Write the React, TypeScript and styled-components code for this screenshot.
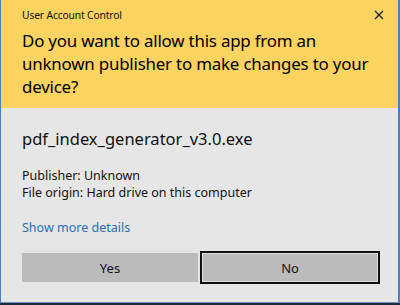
import styled, { createGlobalStyle } from 'styled-components'

const GlobalStyle = createGlobalStyle`
  html, body {
    margin: 0;
    padding: 0;
    background: #1d2b3c;
  }
  body {
    font-family: "Noto Sans", "Open Sans", sans-serif;
  }
`

const Window = styled.div`
  width: 400px;
  height: 303px;
  box-sizing: border-box;
  border-left: 1px solid #4a7fc0;
  border-right: 2px solid #4a7fc0;
  border-bottom: 1px solid #6f93c2;
  display: flex;
  flex-direction: column;
  background: #e6e6e6;
`

const Header = styled.header`
  background: #fbd360;
  height: 108px;
  padding: 0 11px 0 21px;
  box-sizing: border-box;
  color: #000;
`

const TitleRow = styled.div`
  height: 30px;
  display: flex;
  align-items: center;
  justify-content: space-between;
`

const Title = styled.span`
  font-size: 10.3px;
  letter-spacing: -0.15px;
  color: #111;
`

const Close = styled.button`
  width: 16px;
  height: 16px;
  padding: 0;
  border: none;
  background: transparent;
  display: flex;
  align-items: center;
  justify-content: center;
`

const Question = styled.h1`
  margin: -1px 3px 0 0;
  font-weight: 400;
  font-size: 16.9px;
  letter-spacing: -0.2px;
  line-height: 23px;
  color: #000;
`

const Body = styled.section`
  flex: 1;
  padding: 20px 18px 0 21px;
  display: flex;
  flex-direction: column;
`

const FileName = styled.div`
  font-size: 16.5px;
  color: #111;
  line-height: 22px;
`

const Details = styled.div`
  margin-top: 17px;
  font-size: 12.5px;
  line-height: 17px;
  color: #111;
`

const MoreLink = styled.a`
  margin-top: 18px;
  font-size: 12.5px;
  line-height: 17px;
  color: #2d6fb5;
  text-decoration: none;
`

const Buttons = styled.div`
  margin-top: 15px;
  display: flex;
  gap: 2px;
  align-items: center;
`

const Button = styled.button<{ $focused?: boolean }>`
  flex: 1;
  font-family: inherit;
  font-size: 13px;
  color: #111;
  background: #bbbbbb;
  box-sizing: border-box;
  border: ${(p) => (p.$focused ? '2px solid #111' : 'none')};
  box-shadow: ${(p) => (p.$focused ? 'inset 0 0 0 1px #e0e0e0' : 'none')};
  height: ${(p) => (p.$focused ? '33px' : '29px')};
`

export default function App() {
  return (
    <>
      <GlobalStyle />
      <Window>
        <Header>
          <TitleRow>
            <Title>User Account Control</Title>
            <Close aria-label="Close">
              <svg width="10" height="10" viewBox="0 0 10 10">
                <path d="M1 1 L9 9 M9 1 L1 9" stroke="#222" strokeWidth="1.3" fill="none" />
              </svg>
            </Close>
          </TitleRow>
          <Question>
            Do you want to allow this app from an unknown publisher to make changes to your device?
          </Question>
        </Header>
        <Body>
          <FileName>pdf_index_generator_v3.0.exe</FileName>
          <Details>
            <div>Publisher: Unknown</div>
            <div>File origin: Hard drive on this computer</div>
          </Details>
          <MoreLink href="#">Show more details</MoreLink>
          <Buttons>
            <Button>Yes</Button>
            <Button $focused>No</Button>
          </Buttons>
        </Body>
      </Window>
    </>
  )
}
